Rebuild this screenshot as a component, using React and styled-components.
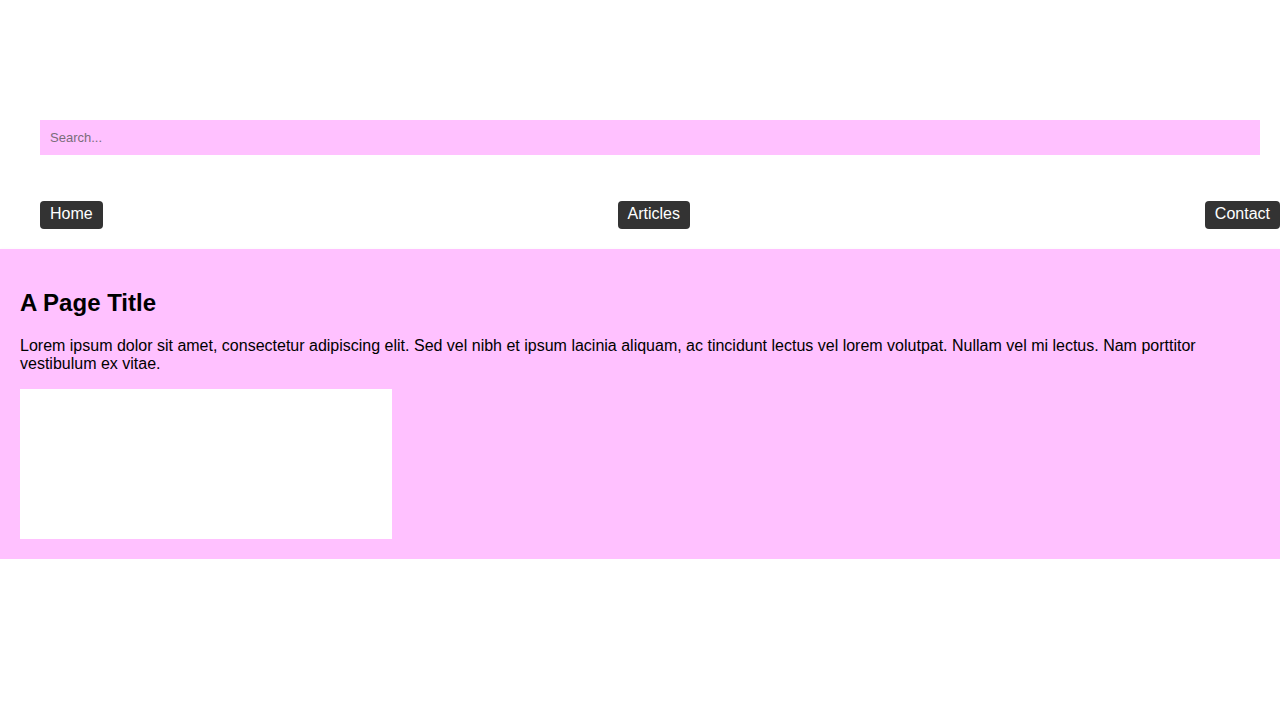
import styled, { createGlobalStyle } from "styled-components";

const GlobalStyle = createGlobalStyle`
  body {
    margin: 0;
    background: #ffffff;
    font-family: "Liberation Sans", Arial, sans-serif;
  }
`;

const Header = styled.header`
  display: flex;
  flex-direction: column;
  padding: 120px 0 20px 40px;
`;

const SearchInput = styled.input`
  box-sizing: border-box;
  height: 35px;
  margin-right: 20px;
  padding: 0 10px;
  border: none;
  outline: none;
  background-color: #ffc1ff;
  font-family: "Liberation Sans", Arial, sans-serif;
  font-size: 13px;
  color: #333;

  &::placeholder {
    color: #7a6d7a;
  }
`;

const Nav = styled.nav`
  display: flex;
  justify-content: space-between;
  margin-top: 46px;
`;

const NavLink = styled.a`
  display: inline-block;
  height: 28px;
  line-height: 26px;
  padding: 0 10px 2px;
  box-sizing: border-box;
  border-radius: 4px;
  background-color: #333333;
  color: #ffffff;
  text-decoration: none;
  font-size: 16px;
`;

const Section = styled.section`
  padding: 20px;
  background-color: #ffc1ff;
  box-shadow: 0 4px 5px rgba(0, 0, 0, 0.25);
`;

const Title = styled.h2`
  margin: 20px 0;
  font-size: 24px;
  font-weight: bold;
  color: #000;
`;

const Text = styled.p`
  margin: 0 0 16px;
  font-size: 16px;
  line-height: 18px;
  color: #000;
`;

const Picture = styled.div`
  width: 372px;
  height: 150px;
  background-color: #ffffff;
`;

function App() {
  return (
    <>
      <GlobalStyle />
      <Header>
        <SearchInput type="text" placeholder="Search..." />
        <Nav>
          <NavLink href="#home">Home</NavLink>
          <NavLink href="#articles">Articles</NavLink>
          <NavLink href="#contact">Contact</NavLink>
        </Nav>
      </Header>
      <Section>
        <Title>A Page Title</Title>
        <Text>
          Lorem ipsum dolor sit amet, consectetur adipiscing elit. Sed vel nibh et ipsum lacinia aliquam, ac tincidunt lectus vel lorem volutpat. Nullam vel mi lectus. Nam porttitor vestibulum ex vitae.
        </Text>
        <Picture />
      </Section>
    </>
  );
}

export default App;
